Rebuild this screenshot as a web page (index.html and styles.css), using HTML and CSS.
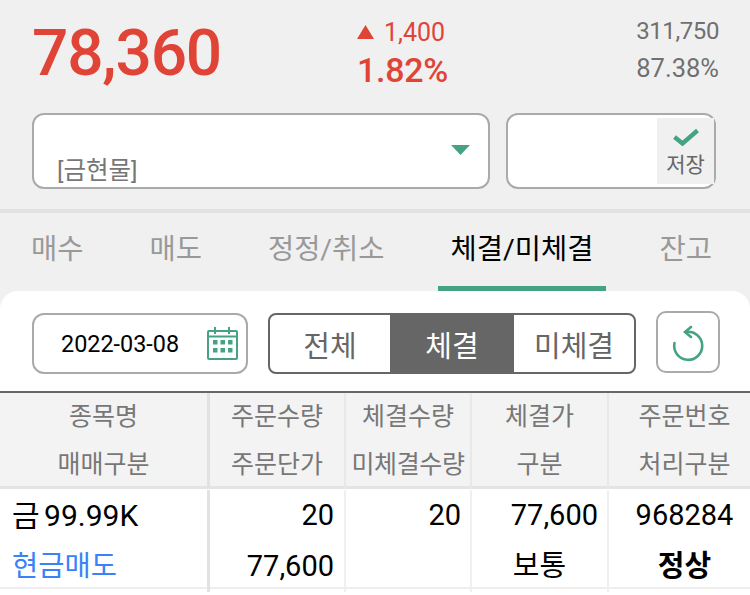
FILE: index.html
```html
<!DOCTYPE html>
<html lang="ko">
<head>
    <meta charset="UTF-8">
    <meta name="viewport" content="width=device-width, initial-scale=1.0">
    <title>체결/미체결</title>
    <link rel="stylesheet" href="styles.css">
</head>
<body>

    <header class="quote">
        <div class="price">78,360</div>
        <div class="change">
            <div class="change-amount">
                <svg class="up-mark" width="17" height="14" viewBox="0 0 17 14"><polygon points="8.5,0 17,14 0,14"/></svg>
                1,400
            </div>
            <div class="change-rate">1.82%</div>
        </div>
        <div class="volume">
            <div class="volume-count">311,750</div>
            <div class="volume-rate">87.38%</div>
        </div>
    </header>

    <div class="filters">
        <div class="product-select">
            <span class="product-name">[금현물]</span>
            <svg class="select-arrow" width="19" height="10" viewBox="0 0 19 10"><polygon points="0,0 19,0 9.5,10"/></svg>
        </div>
        <div class="save-box">
            <div class="save-btn">
                <svg width="26" height="18" viewBox="0 0 26 18"><path d="M1.5 9 L9.5 15.5 L24.5 2.5" fill="none" stroke="#45a383" stroke-width="4.4"/></svg>
                <span>저장</span>
            </div>
        </div>
    </div>

    <nav class="tabs">
        <div class="tab">매수</div>
        <div class="tab">매도</div>
        <div class="tab">정정/취소</div>
        <div class="tab active">체결/미체결</div>
        <div class="tab">잔고</div>
    </nav>

    <main class="panel">
        <div class="toolbar">
            <div class="date-box">
                <span class="date-text">2022-03-08</span>
                <svg class="calendar" width="32" height="33" viewBox="0 0 32 33" fill="none" stroke="#45a383" stroke-width="2">
                    <rect x="1" y="4" width="29" height="28" rx="1"/>
                    <path d="M1 9.5 H30 M8 0 V7 M22 0 V7"/>
                    <g fill="#45a383" stroke="none">
                        <rect x="6" y="13" width="4.5" height="4.5"/>
                        <rect x="13.5" y="13" width="4.5" height="4.5"/>
                        <rect x="21" y="13" width="4.5" height="4.5"/>
                        <rect x="6" y="21" width="4.5" height="4.5"/>
                        <rect x="13.5" y="21" width="4.5" height="4.5"/>
                        <rect x="21" y="21" width="4.5" height="4.5"/>
                    </g>
                </svg>
            </div>
            <div class="segment">
                <div class="seg-item seg-first">전체</div>
                <div class="seg-item seg-active">체결</div>
                <div class="seg-item seg-last">미체결</div>
            </div>
            <div class="refresh-btn">
                <svg width="60" height="58" viewBox="0 0 60 58" fill="none" stroke="#45a383" stroke-width="2.6" stroke-linecap="round">
                    <path d="M16.5 30 A14 14 0 1 0 28 19"/>
                    <path d="M33 14 L27 19 L33 24"/>
                </svg>
            </div>
        </div>

        <div class="grid-head">
            <div class="cell cell-name"><div>종목명</div><div>매매구분</div></div>
            <div class="cell"><div>주문수량</div><div>주문단가</div></div>
            <div class="cell"><div>체결수량</div><div class="tight">미체결수량</div></div>
            <div class="cell"><div>체결가</div><div>구분</div></div>
            <div class="cell cell-last"><div>주문번호</div><div>처리구분</div></div>
        </div>

        <div class="grid-row">
            <div class="cell cell-name"><div class="item-name">금 99.99K</div><div class="trade-type">현금매도</div></div>
            <div class="cell num num-order"><div>20</div><div>77,600</div></div>
            <div class="cell num num-done"><div>20</div><div></div></div>
            <div class="cell num num-price"><div>77,600</div><div class="center">보통</div></div>
            <div class="cell cell-last"><div>968284</div><div class="bold">정상</div></div>
        </div>
    </main>

</body>
</html>
```

FILE: styles.css
```css
body {
    font-family: Roboto, "Noto Sans CJK KR", sans-serif;
    background-color: #f0f0f0;
    margin: 0;
    padding: 0;
    height: 595px;
    overflow: hidden;
}

/* 현재가 */
.quote {
    display: flex;
    height: 113px;
    padding: 0 31px 0 32px;
    box-sizing: border-box;
}

.price {
    width: 325px;
    font-size: 64px;
    font-weight: 500;
    line-height: 108px;
    letter-spacing: -1.2px;
    color: #e04437;
}

.change {
    flex: 1;
    padding-top: 13px;
    color: #e04437;
}

.change-amount {
    display: flex;
    align-items: center;
    gap: 10px;
    height: 38px;
    font-size: 25px;
}

.up-mark {
    fill: #e04437;
}

.change-rate {
    height: 38px;
    line-height: 38px;
    font-size: 34px;
    font-weight: 500;
    letter-spacing: -0.3px;
}

.volume {
    padding-top: 13px;
    text-align: right;
    line-height: 37px;
    color: #707070;
}

.volume-count {
    font-size: 24px;
    letter-spacing: -0.4px;
}

.volume-rate {
    font-size: 25.5px;
}

/* 종목 선택 */
.filters {
    display: flex;
    gap: 16px;
    padding-left: 32px;
    height: 76px;
}

.product-select {
    position: relative;
    width: 458px;
    box-sizing: border-box;
    background-color: #fff;
    border: 2px solid #aaa;
    border-radius: 12px;
    padding: 39px 0 0 23px;
}

.product-name {
    font-size: 24.5px;
    line-height: 34px;
    color: #777;
}

.select-arrow {
    position: absolute;
    right: 18px;
    top: 30px;
    fill: #45a383;
}

.save-box {
    width: 210px;
    box-sizing: border-box;
    background-color: #fff;
    border: 2px solid #aaa;
    border-radius: 12px;
    padding: 3px 0 3px 149px;
}

.save-btn {
    display: flex;
    flex-direction: column;
    align-items: center;
    height: 100%;
    background-color: #f0f0f0;
    padding-top: 10px;
    box-sizing: border-box;
    font-size: 21px;
    color: #666;
}

.save-btn span {
    line-height: 30px;
    margin-top: 4px;
}

/* 탭 */
.tabs {
    display: flex;
    gap: 41px;
    margin-top: 20px;
    height: 78px;
    padding-left: 18.5px;
    border-top: 4px solid #e2e2e2;
}

.tab {
    padding: 0 12.5px;
    height: 73px;
    line-height: 74px;
    font-size: 28.5px;
    color: #999;
}

.tab.active {
    color: #000;
    border-bottom: 5px solid #45a383;
}

/* 조회 영역 */
.panel {
    background-color: #fff;
    border-radius: 18px 18px 0 0;
    height: 304px;
}

.toolbar {
    display: flex;
    align-items: flex-start;
    height: 100px;
    padding: 22px 0 0 32px;
    box-sizing: border-box;
}

.date-box {
    display: flex;
    align-items: center;
    justify-content: space-between;
    width: 216px;
    height: 61px;
    box-sizing: border-box;
    border: 2px solid #aaa;
    border-radius: 12px;
    padding: 0 7px 0 27px;
    font-size: 23.4px;
    color: #000;
}

.calendar {
    margin-top: -1px;
}

.segment {
    display: flex;
    width: 368px;
    height: 61px;
    margin-left: 20px;
    box-sizing: border-box;
    border: 2px solid #666;
    border-radius: 8px;
    overflow: hidden;
    font-size: 29px;
    color: #666;
}

.seg-item {
    display: flex;
    align-items: center;
    justify-content: center;
    height: 100%;
}

.seg-first {
    width: 120px;
}

.seg-active {
    width: 124px;
    background-color: #666;
    color: #fff;
}

.seg-last {
    flex: 1;
}

.refresh-btn {
    width: 64px;
    height: 62px;
    margin: -2px 0 0 20px;
    box-sizing: border-box;
    border: 2px solid #aaa;
    border-radius: 10px;
}

/* 체결 내역 */
.grid-head,
.grid-row {
    display: grid;
    grid-template-columns: 210px 136px 126px 137px 141px;
}

.grid-head {
    height: 98px;
    box-sizing: border-box;
    border-top: 2px solid #666;
    border-bottom: 3px solid #e4e4e4;
    background-color: #f3f3f3;
    font-size: 25px;
    line-height: 48px;
    color: #777;
    text-align: center;
}

.tight {
    letter-spacing: -0.4px;
}

.grid-row {
    height: 100px;
    box-sizing: border-box;
    padding-top: 1px;
    border-bottom: 2px solid #eee;
    font-size: 29px;
    line-height: 51px;
    color: #000;
}

.cell {
    margin-bottom: -2px;
    border-right: 2px solid #e8e8e8;
    white-space: nowrap;
}

.grid-head .cell {
    margin-bottom: 0;
}

.cell-name {
    border-right: 3px solid #e2e2e2;
}

.cell-last {
    border-right: none;
    padding-left: 10px;
    text-align: center;
}

.grid-row .cell {
    border-right-color: #f0f0f0;
}

.grid-row .cell-name {
    border-right-color: #e2e2e2;
    padding-left: 12px;
}

.item-name {
    font-size: 30px;
    word-spacing: -3px;
}

.trade-type {
    font-size: 28.5px;
    color: #3a82f7;
}

.num {
    text-align: right;
}

.num-order {
    padding-right: 10px;
}

.num-done {
    padding-right: 9px;
}

.num-price {
    padding-right: 9px;
}

.center {
    text-align: center;
    margin-right: -9px;
}

.bold {
    font-weight: 700;
}
```
